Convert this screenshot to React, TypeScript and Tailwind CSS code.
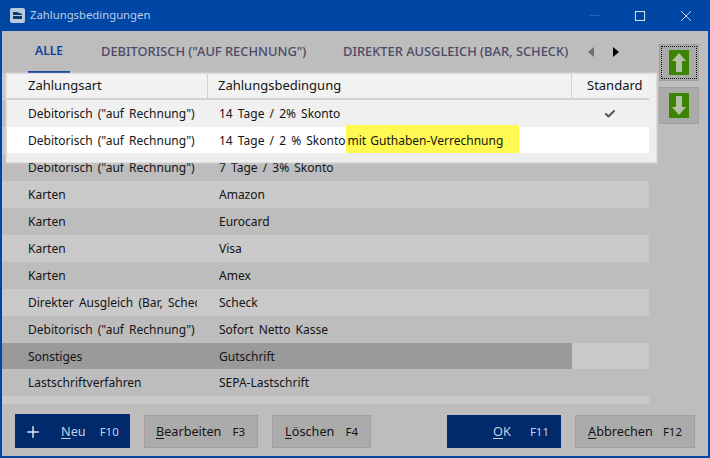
import { Check, Plus } from 'lucide-react'

const FONT = "font-['Noto_Sans','Open_Sans',sans-serif]"

const rows = [
  { art: 'Debitorisch ("auf Rechnung")', term: '14 Tage / 2% Skonto', bg: 'bg-[#bdbdbd]' },
  { art: 'Debitorisch ("auf Rechnung")', term: '14 Tage / 2 % Skonto', bg: 'bg-[#c9c9c9]' },
  { art: 'Debitorisch ("auf Rechnung")', term: '7 Tage / 3% Skonto', bg: 'bg-[#bdbdbd]' },
  { art: 'Karten', term: 'Amazon', bg: 'bg-[#c9c9c9]' },
  { art: 'Karten', term: 'Eurocard', bg: 'bg-[#bdbdbd]' },
  { art: 'Karten', term: 'Visa', bg: 'bg-[#c9c9c9]' },
  { art: 'Karten', term: 'Amex', bg: 'bg-[#bdbdbd]' },
  { art: 'Direkter Ausgleich (Bar, Scheck)', term: 'Scheck', bg: 'bg-[#c9c9c9]' },
  { art: 'Debitorisch ("auf Rechnung")', term: 'Sofort Netto Kasse', bg: 'bg-[#bdbdbd]' },
]

function Row({ art, term, bg }: { art: string; term: string; bg: string }) {
  return (
    <div className={`flex h-[27px] items-center text-[12px] text-[#141414] [word-spacing:2px] ${bg}`}>
      <div className="w-[195px] shrink-0 overflow-hidden whitespace-nowrap pl-[26px]">{art}</div>
      <div className="pl-[22px]">{term}</div>
    </div>
  )
}

function Arrow({ up }: { up?: boolean }) {
  return (
    <div className="flex h-[25px] w-[20px] items-center justify-center bg-[#3d8500]">
      <svg width="16" height="21" viewBox="0 0 16 21" className={up ? '' : 'rotate-180'}>
        <path d="M8 1 L15 9 H11 V20 H5 V9 H1 Z" fill="#b4bfa8" />
      </svg>
    </div>
  )
}

function Btn({ label, rest, fkey, primary, w, gap }: { label: string; rest: string; fkey: string; primary?: boolean; w: string; gap: string }) {
  return (
    <button
      className={`flex h-[33px] items-center justify-end pr-[12px] pt-px text-[11.5px] ${gap} ${w} ${
        primary ? 'bg-[#002a6b] text-[#c5d0e0]' : 'border border-[#9f9f9f] bg-[#ababab] text-[#141414]'
      }`}
    >
      <span className="text-[12.7px]">
        <span className="underline underline-offset-2">{label}</span>
        {rest}
      </span>
      <span>{fkey}</span>
    </button>
  )
}

export default function App() {
  return (
    <div className={`flex h-[458px] w-[710px] flex-col overflow-hidden border-x-2 border-b-2 border-[#0047a5] bg-[#bdbdbd] ${FONT}`}>
      {/* title bar */}
      <div className="-mx-[2px] flex h-[31px] shrink-0 items-center bg-[#0047a5] pl-[10px] text-[#b9cde8]">
        <div className="flex h-[15px] w-[15px] items-center justify-center rounded-[2px] bg-[#b9c9dc]">
          <svg width="11" height="9" viewBox="0 0 11 9">
            <path d="M1 1 L5 1 L10 3 L10 4 L1 4 Z M1 5 H10 V8 H1 Z" fill="#0a3a78" />
          </svg>
        </div>
        <span className="ml-[5px] text-[11.3px]">Zahlungsbedingungen</span>
        <div className="ml-auto flex items-center">
          <div className="mr-[35px] h-px w-[10px] bg-[#2a63ae]" />
          <div className="mr-[36px] h-[10px] w-[10px] border border-[#d4dfee]" />
          <svg width="10" height="10" viewBox="0 0 10 10" className="mr-[19px]">
            <path d="M0 0 L10 10 M10 0 L0 10" stroke="#c3d2e6" strokeWidth="1" />
          </svg>
        </div>
      </div>

      <div className="flex min-h-0 flex-1">
        <div className="flex w-[647px] shrink-0 flex-col">
          {/* tabs */}
          <div className="flex h-[42px] shrink-0 items-stretch text-[12.85px] font-medium text-[#4c4a68]">
            <div className="ml-[26px] flex w-[42px] items-center justify-center border-b-2 border-[#0f3f96] text-[12px] font-semibold text-[#0f3f96]">ALLE</div>
            <div className="ml-[31px] flex w-[205px] items-center whitespace-nowrap">DEBITORISCH ("AUF RECHNUNG")</div>
            <div className="ml-[37px] flex w-[223px] items-center whitespace-nowrap">DIREKTER AUSGLEICH (BAR, SCHECK)</div>
            <div className="ml-[22px] flex items-center">
              <div className="h-0 w-0 border-y-[5px] border-r-[6px] border-y-transparent border-r-[#6e6e6e]" />
              <div className="ml-[19px] h-0 w-0 border-y-[5px] border-l-[6px] border-y-transparent border-l-black" />
            </div>
          </div>

          {/* table */}
          <div className="relative flex flex-1 flex-col bg-[#c9c9c9]">
            <div className="h-[27px] shrink-0" />
            {rows.map((r, i) => (
              <Row key={i} {...r} />
            ))}
            <div className="flex h-[26px] items-center text-[12px] text-[#141414]">
              <div className="flex h-full w-[570px] items-center bg-[#9a9a9a] pt-px">
                <div className="w-[195px] shrink-0 pl-[26px]">Sonstiges</div>
                <div className="pl-[22px]">Gutschrift</div>
              </div>
              <div className="h-full flex-1 bg-[#c9c9c9]" />
            </div>
            <Row art="Lastschriftverfahren" term="SEPA-Lastschrift" bg="bg-[#bdbdbd] pt-px" />

            {/* highlighted overlay */}
            <div className="absolute left-[4px] top-0 h-[90px] w-[651px] border border-[#dcdcdc] bg-[#eeeeee] shadow-[0_0_2px_rgba(255,255,255,0.6)]">
              <div className="w-[642px]">
                <div className="flex h-[26px] items-center border-b-2 border-[#d2d2d2] bg-[#f2f2f2] text-[13px] text-[#141414]">
                  <div className="flex h-full w-[201px] items-center border-r border-[#d2d2d2] pl-[21px]">Zahlungsart</div>
                  <div className="flex h-full w-[364px] items-center border-r border-[#d2d2d2] pl-[10px]">Zahlungsbedingung</div>
                  <div className="flex-1 pl-[15px]">Standard</div>
                </div>
                <div className="flex h-[27px] items-center bg-[#f0f0f0] pt-px text-[12px] text-[#141414] [word-spacing:2px]">
                  <div className="w-[190px] shrink-0 pl-[21px]">Debitorisch ("auf Rechnung")</div>
                  <div className="pl-[22px]">14 Tage / 2% Skonto</div>
                  <Check className="ml-auto mr-[33px]" size={12} strokeWidth={4} color="#555555" />
                </div>
                <div className="flex h-[26px] items-center bg-white pt-[2px] text-[12px] text-[#141414] [word-spacing:2px]">
                  <div className="w-[190px] shrink-0 pl-[21px]">Debitorisch ("auf Rechnung")</div>
                  <div className="pl-[22px]">14 Tage / 2 % Skonto</div>
                  <div className="flex h-[28px] w-[173px] items-center self-end bg-[#fff952] pl-[2px] pt-[3px] [word-spacing:1px]">mit Guthaben-Verrechnung</div>
                </div>
              </div>
            </div>
          </div>
        </div>

        {/* side buttons */}
        <div className="ml-[10px] flex flex-col gap-[6px] pt-[13px]">
          <div className="flex h-[37px] w-[40px] items-center justify-center border border-[#9f9f9f] bg-[#ababab] outline-1 -outline-offset-3 outline-dotted outline-black">
            <Arrow up />
          </div>
          <div className="flex h-[37px] w-[40px] items-center justify-center border border-[#9f9f9f] bg-[#ababab]">
            <Arrow />
          </div>
        </div>
      </div>

      {/* footer buttons */}
      <div className="flex h-[52px] shrink-0 items-center pt-[2px]">
        <button className="ml-[13px] flex h-[34px] w-[115px] items-center bg-[#002a6b] pt-px text-[11.5px] text-[#c5d0e0]">
          <Plus className="ml-[9px]" size={18} strokeWidth={2} color="#dfe6f0" />
          <span className="ml-[19px] text-[12.7px]">
            <span className="underline underline-offset-2">N</span>eu
          </span>
          <span className="ml-[14px]">F10</span>
        </button>
        <div className="ml-[14px]"><Btn label="B" rest="earbeiten" fkey="F3" w="w-[114px]" gap="gap-[11px]" /></div>
        <div className="ml-[14px]"><Btn label="L" rest="öschen" fkey="F4" w="w-[99px]" gap="gap-[11px]" /></div>
        <div className="ml-[76px]"><Btn label="O" rest="K" fkey="F11" primary w="w-[114px]" gap="gap-[19px]" /></div>
        <div className="ml-[14px]"><Btn label="A" rest="bbrechen" fkey="F12" w="w-[120px]" gap="gap-[10px]" /></div>
      </div>
    </div>
  )
}
